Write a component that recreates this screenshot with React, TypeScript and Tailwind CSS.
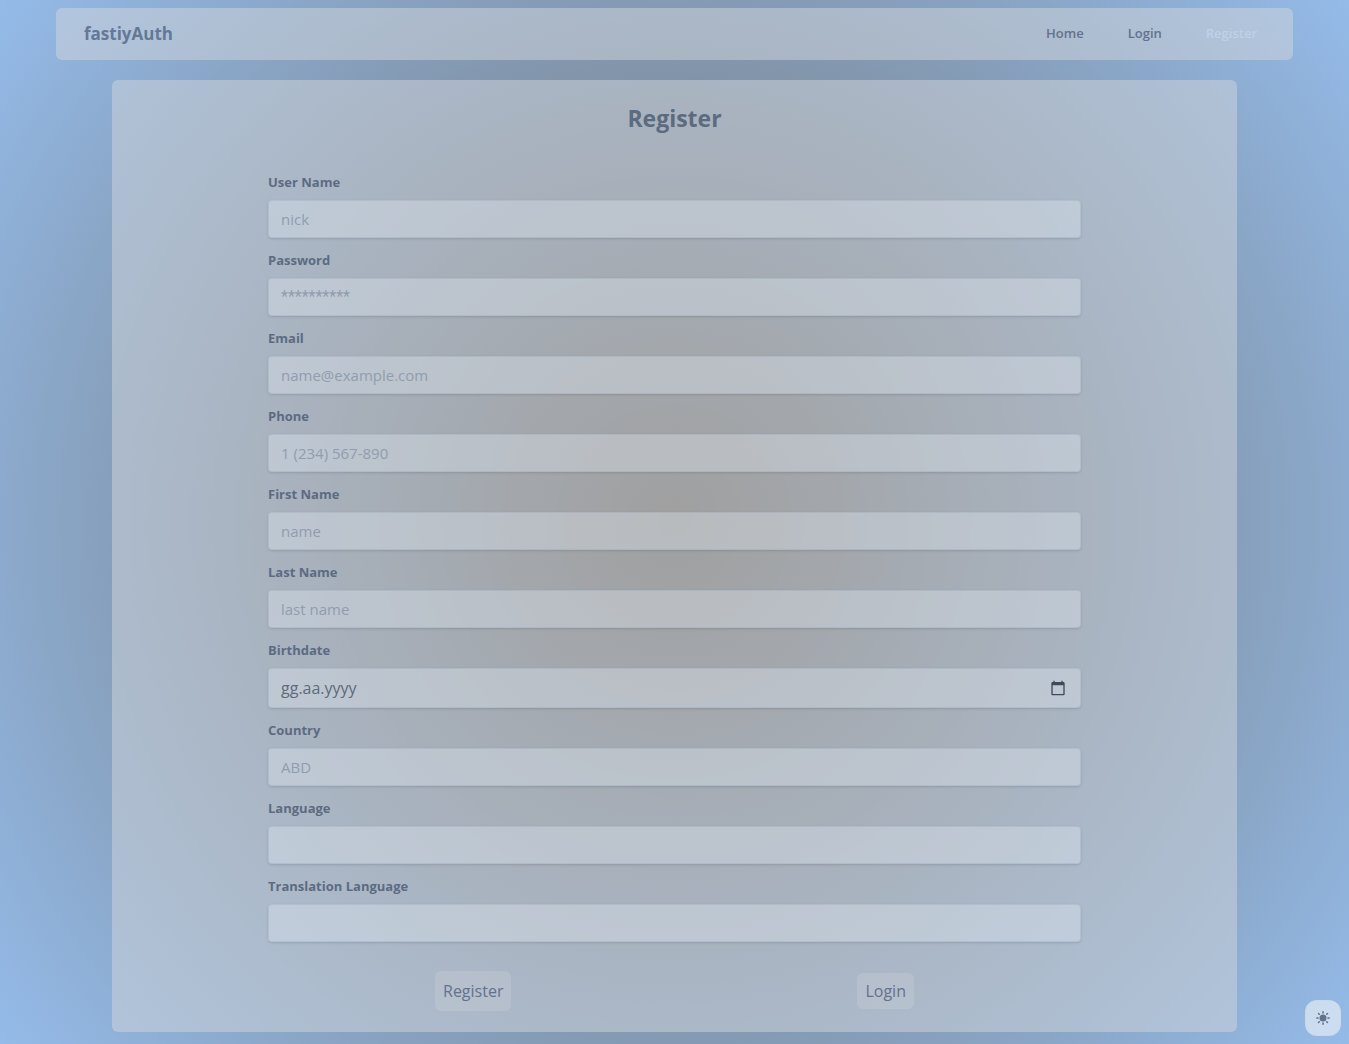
import React from "react";

type Field = { id: string; label: string; type: string; placeholder?: string };

const fields: Field[] = [
  { id: "username", label: "User Name", type: "text", placeholder: "nick" },
  { id: "password", label: "Password", type: "password", placeholder: "**********" },
  { id: "email", label: "Email", type: "email", placeholder: "name@example.com" },
  { id: "phone", label: "Phone", type: "tel", placeholder: "1 (234) 567-890" },
  { id: "firstName", label: "First Name", type: "text", placeholder: "name" },
  { id: "lastName", label: "Last Name", type: "text", placeholder: "last name" },
  { id: "birthdate", label: "Birthdate", type: "date", placeholder: "gg.aa.yyyy" },
  { id: "country", label: "Country", type: "text", placeholder: "ABD" },
  { id: "language", label: "Language", type: "text" },
  { id: "translation", label: "Translation Language", type: "text" },
];

const box =
  "w-full rounded border border-slate-400/30 bg-[#e6eef6]/35 px-3 leading-6 text-[#5f6b7a] shadow-sm outline-none";

function CalendarIcon() {
  return (
    <svg viewBox="0 0 24 24" className="size-4" fill="currentColor" aria-hidden="true">
      <path d="M20 3h-1V1h-2v2H7V1H5v2H4c-1.1 0-2 .9-2 2v16c0 1.1.9 2 2 2h16c1.1 0 2-.9 2-2V5c0-1.1-.9-2-2-2zm0 18H4V8h16v13z" />
    </svg>
  );
}

function SunIcon() {
  return (
    <svg viewBox="0 0 14 14" className="size-3.5" stroke="currentColor" strokeWidth="1.5" strokeLinecap="round" aria-hidden="true">
      <circle cx="7" cy="7" r="3.5" fill="currentColor" stroke="none" />
      <path d="M7 .8v1.2M7 12v1.2M.8 7h1.2M12 7h1.2M2.5 2.5l.8.8M10.7 10.7l.8.8M2.5 11.5l.8-.8M10.7 3.3l.8-.8" />
    </svg>
  );
}

function FormField({ field }: { field: Field }) {
  const font = field.type === "password" ? "font-[Roboto] text-base" : "text-[15px]";
  return (
    <div className="flex flex-col gap-2">
      <label htmlFor={field.id} className="text-[13px] leading-5 font-bold text-[#5c6b82]">
        {field.label}
      </label>
      {field.type === "date" ? (
        <div className={`${box} flex items-center py-[7px] text-base`}>
          <input
            id={field.id}
            type="text"
            placeholder={field.placeholder}
            className="min-w-0 flex-1 bg-transparent outline-none placeholder:text-[#5f6b7a]"
          />
          <button type="button" aria-label="Pick a date" className="mr-0.5 text-[#404a57]">
            <CalendarIcon />
          </button>
        </div>
      ) : (
        <input
          id={field.id}
          type={field.type}
          placeholder={field.placeholder}
          className={`${box} ${font} py-1.5 placeholder:text-[#919cae]`}
        />
      )}
    </div>
  );
}

export default function App() {
  return (
    <div className="min-h-screen bg-[radial-gradient(circle,#6d6963_0%,#94bbe9_100%)] pt-2 pb-3 font-['Open_Sans','Noto_Sans',sans-serif] text-[#62728c]">
      <nav className="mx-14 flex h-13 items-center justify-between rounded-md bg-gray-300/50 pr-9 pl-7">
        <a href="#" className="text-[17px] font-bold text-[#647897]">
          fastiyAuth
        </a>
        <div className="flex items-center gap-11 text-[13px] font-semibold">
          <a href="#">Home</a>
          <a href="#">Login</a>
          <a href="#" aria-current="page" className="text-[#bfd0e8]">
            Register
          </a>
        </div>
      </nav>

      <main className="mx-28 mt-5 rounded-md bg-gray-300/50 px-39 pt-5 pb-[21px]">
        <h1 className="mb-9 text-center text-[23px] leading-9 font-bold text-[#5c6b80]">Register</h1>
        <form className="flex flex-col gap-3" onSubmit={(e) => e.preventDefault()}>
          {fields.map((f) => (
            <FormField key={f.id} field={f} />
          ))}
          <div className="mt-[17px] flex items-center justify-around gap-3 font-medium">
            <button type="submit" className="h-10 rounded-md bg-gray-300/30 px-2">
              Register
            </button>
            <button type="button" className="h-9 rounded-md bg-gray-300/30 px-2">
              Login
            </button>
          </div>
        </form>
      </main>

      <button
        type="button"
        aria-label="Toggle theme"
        className="fixed right-2 bottom-2 flex size-9 items-center justify-center rounded-xl border border-slate-300/60 bg-slate-100/60"
      >
        <SunIcon />
      </button>
    </div>
  );
}
